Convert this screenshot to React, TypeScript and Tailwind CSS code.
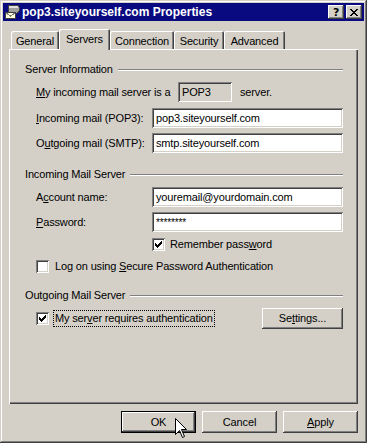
import React from 'react';

// classic win2000 bevels
const raised =
  'shadow-[inset_-1px_-1px_#404040,inset_1px_1px_#ffffff,inset_-2px_-2px_#808080,inset_2px_2px_#d4d0c8]';
const sunken =
  'shadow-[inset_1px_1px_#808080,inset_-1px_-1px_#ffffff,inset_2px_2px_#404040,inset_-2px_-2px_#d4d0c8]';

function MailIcon() {
  return (
    <svg width="16" height="16" viewBox="0 0 16 16" shapeRendering="crispEdges">
      <rect x="4" y="1" width="11" height="8" rx="2" fill="#a0a0a0" stroke="#404040" />
      <rect x="5" y="2" width="9" height="2" fill="#e0e0e0" />
      <rect x="1.5" y="8.5" width="10" height="6" fill="#ffffd8" stroke="#404040" />
      <path d="M2 9 L6.5 12 L11 9" fill="none" stroke="#808080" />
    </svg>
  );
}

function CheckMark() {
  const tops = [5, 6, 7, 6, 5, 4, 3];
  return (
    <svg width="13" height="13" viewBox="0 0 13 13" shapeRendering="crispEdges" className="absolute left-0 top-0">
      {tops.map((t, i) => (
        <rect key={i} x={3 + i} y={t} width="1" height="3" fill="#000" />
      ))}
    </svg>
  );
}

function Checkbox({ checked }: { checked?: boolean }) {
  return (
    <div className={`relative w-[13px] h-[13px] shrink-0 bg-white ${sunken}`}>
      {checked && <CheckMark />}
    </div>
  );
}

function Field({ value, small }: { value: string; small?: boolean }) {
  return (
    <div className={`flex-1 h-[20px] bg-white ${sunken} flex items-center pl-[4px] ${small ? 'text-[10px] pt-[1px]' : ''}`}>
      {value}
    </div>
  );
}

function GroupHeader({ title }: { title: string }) {
  return (
    <div className="flex items-center h-[13px]">
      <span>{title}</span>
      <div className="flex-1 ml-[5px] h-[2px] border-t border-[#808080] border-b border-b-white" />
    </div>
  );
}

function Button({ children, className = '', isDefault }: { children: React.ReactNode; className?: string; isDefault?: boolean }) {
  const bevel = isDefault
    ? 'shadow-[inset_0_0_0_1px_#000000,inset_-2px_-2px_#404040,inset_2px_2px_#ffffff,inset_-3px_-3px_#808080]'
    : raised;
  return <div className={`relative flex items-center justify-center bg-[#d4d0c8] ${bevel} ${className}`}>{children}</div>;
}

export default function App() {
  return (
    <div className="w-[367px] h-[443px] bg-[#d4d0c8] p-[3px] text-black text-[11px] tracking-[-0.15px] leading-none font-['Liberation_Sans',Arial,sans-serif] shadow-[inset_-1px_-1px_#404040,inset_1px_1px_#d4d0c8,inset_-2px_-2px_#808080,inset_2px_2px_#ffffff] select-none">
      {/* title bar */}
      <div className="h-[18px] bg-[#0a0a80] flex items-center pl-[1px] pr-[2px]">
        <MailIcon />
        <span className="ml-[2px] text-white font-bold text-[12px] tracking-[0px]">pop3.siteyourself.com Properties</span>
        <div className="ml-auto flex gap-[2px]">
          <div className={`w-[16px] h-[14px] bg-[#d4d0c8] ${raised} flex items-center justify-center font-bold text-[11px] font-['DejaVu_Sans',sans-serif]`}>
            ?
          </div>
          <div className={`w-[16px] h-[14px] bg-[#d4d0c8] ${raised} flex items-center justify-center`}>
            <svg width="8" height="7" viewBox="0 0 8 7" shapeRendering="crispEdges">
              <path d="M0 0h2v1h-2zM6 0h2v1h-2zM1 1h2v1h-2zM5 1h2v1h-2zM2 2h4v1h-4zM3 3h2v1h-2zM2 4h4v1h-4zM1 5h2v1h-2zM5 5h2v1h-2zM0 6h2v1h-2zM6 6h2v1h-2z" fill="#000" />
            </svg>
          </div>
        </div>
      </div>

      <div className="px-[6px]">
        {/* tabs */}
        <div className="mt-[8px] h-[20px] flex items-end">
          <div className="ml-[2px] w-[48px] h-[18px] rounded-t-[2px] shadow-[inset_1px_1px_#ffffff,inset_-1px_0_#404040,inset_-2px_0_#808080] flex items-center justify-center pt-[2px]">General</div>
          <div className="relative z-10 -mb-[1px] w-[51px] h-[21px] bg-[#d4d0c8] rounded-t-[2px] shadow-[inset_1px_1px_#ffffff,inset_-1px_0_#404040,inset_-2px_0_#808080] flex items-start justify-center pt-[5px]">Servers</div>
          <div className="w-[64px] h-[18px] rounded-t-[2px] shadow-[inset_1px_1px_#ffffff,inset_-1px_0_#404040,inset_-2px_0_#808080] flex items-center justify-center pt-[2px]">Connection</div>
          <div className="w-[50px] h-[18px] rounded-t-[2px] shadow-[inset_1px_1px_#ffffff,inset_-1px_0_#404040,inset_-2px_0_#808080] flex items-center justify-center pt-[2px]">Security</div>
          <div className="w-[61px] h-[18px] rounded-t-[2px] shadow-[inset_1px_1px_#ffffff,inset_-1px_0_#404040,inset_-2px_0_#808080] flex items-center justify-center pt-[2px]">Advanced</div>
        </div>

        {/* panel */}
        <div className="h-[355px] pl-[16px] pr-[15px] pt-[14px] shadow-[inset_1px_1px_#ffffff,inset_-1px_-1px_#404040,inset_-2px_-2px_#808080]">
          <GroupHeader title="Server Information" />

          <div className="ml-[11px] mt-[6px] h-[20px] flex items-center">
            <span className="w-[142px]">
              <u>M</u>y incoming mail server is a
            </span>
            <div className={`w-[54px] h-[20px] ${sunken} flex items-center pl-[4px]`}>POP3</div>
            <span className="ml-[8px]">server.</span>
          </div>

          <div className="ml-[11px] mt-[6px] flex items-center">
            <span className="w-[116px]">
              <u>I</u>ncoming mail (POP3):
            </span>
            <Field value="pop3.siteyourself.com" />
          </div>

          <div className="ml-[11px] mt-[5px] flex items-center">
            <span className="w-[116px]">
              O<u>u</u>tgoing mail (SMTP):
            </span>
            <Field value="smtp.siteyourself.com" />
          </div>

          <div className="mt-[15px]">
            <GroupHeader title="Incoming Mail Server" />
          </div>

          <div className="ml-[11px] mt-[6px] flex items-center">
            <span className="w-[116px]">
              A<u>c</u>count name:
            </span>
            <Field value="youremail@yourdomain.com" />
          </div>

          <div className="ml-[11px] mt-[5px] flex items-center">
            <span className="w-[116px]">
              <u>P</u>assword:
            </span>
            <Field value="********" small />
          </div>

          <div className="ml-[127px] mt-[6px] flex items-center h-[13px]">
            <Checkbox checked />
            <span className="ml-[5px]">
              Remember pass<u>w</u>ord
            </span>
          </div>

          <div className="ml-[11px] mt-[9px] flex items-center h-[13px]">
            <Checkbox />
            <span className="ml-[6px]">
              Log on using <u>S</u>ecure Password Authentication
            </span>
          </div>

          <div className="mt-[16px]">
            <GroupHeader title="Outgoing Mail Server" />
          </div>

          <div className="ml-[11px] mt-[6px] h-[21px] flex items-center">
            <Checkbox checked />
            <span className="ml-[4px] px-[1px] py-[2px] border border-dotted border-black">
              My ser<u>v</u>er requires authentication
            </span>
            <Button className="ml-auto w-[81px] h-[21px]">
              Se<u>t</u>tings...
            </Button>
          </div>
        </div>

        {/* dialog buttons */}
        <div className="mt-[7px] flex justify-end gap-[6px]">
          <Button isDefault className="w-[75px] h-[22px]">
            OK
            <svg width="14" height="22" viewBox="0 0 14 22" className="absolute left-[53px] top-[6px]">
              <path d="M1.5 1.5 L1.5 17.5 L5.5 13.5 L8.5 20.5 L10.5 19.5 L7.5 12.5 L12.5 12.5 Z" fill="#fff" stroke="#000" strokeLinejoin="miter" />
            </svg>
          </Button>
          <Button className="w-[75px] h-[22px]">Cancel</Button>
          <Button className="w-[75px] h-[22px]">
            <u>A</u>pply
          </Button>
        </div>
      </div>
    </div>
  );
}
